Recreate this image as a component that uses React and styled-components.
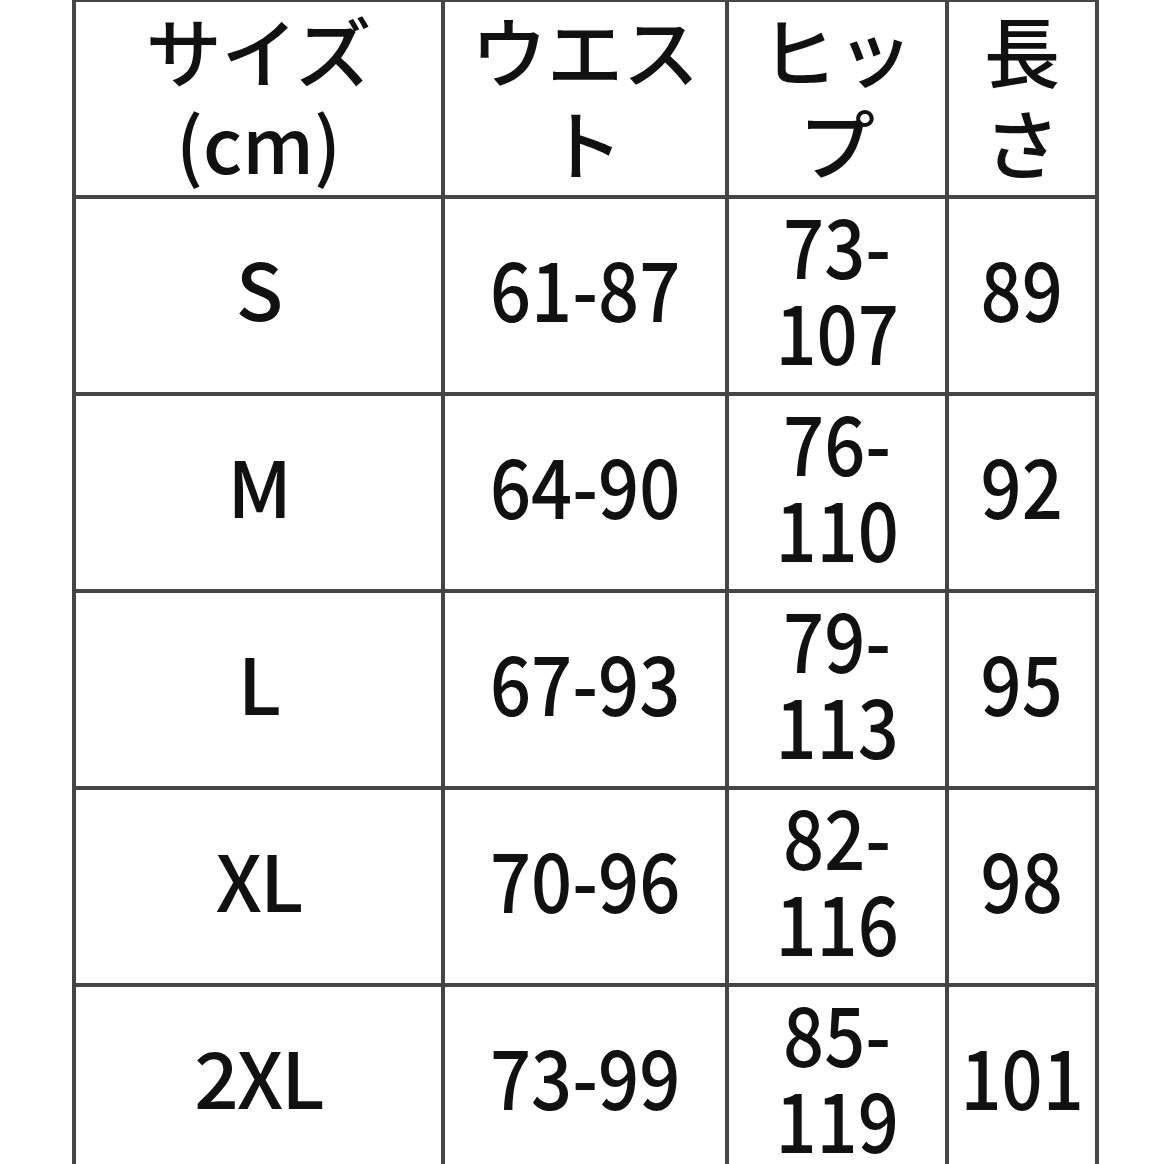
import React from "react";
import styled, { createGlobalStyle } from "styled-components";

const GlobalStyle = createGlobalStyle`
    html, body {
        margin: 0;
        padding: 0;
        background: #ffffff;
    }
    body {
        font-family: "Noto Sans CJK JP", "Noto Sans", sans-serif;
        color: #111111;
        overflow: hidden;
    }
`

const Page = styled.div`
    width: 1164px;
    height: 1164px;
    overflow: hidden;
`

const Table = styled.div`
    display: grid;
    grid-template-columns: 365px 280px 216px 146px;
    grid-auto-rows: 193px;
    gap: 4px;
    padding: 4px;
    background-color: #454545;
    width: fit-content;
    margin: -2px 0 0 72px;
`

const Cell = styled.div`
    background-color: #ffffff;
    display: flex;
    align-items: center;
    justify-content: center;
    text-align: center;
`

const HeadText = styled.div`
    font-size: 76px;
    line-height: 92px;
    font-weight: 500;
    white-space: nowrap;
    padding-bottom: 8px;
`

const SizeText = styled.div`
    font-size: 78px;
    line-height: 88px;
    font-weight: 500;
    letter-spacing: -2px;
    padding-bottom: 18px;
`

const NumText = styled.div`
    display: inline-block;
    font-size: 82px;
    line-height: 86px;
    font-weight: 500;
    white-space: nowrap;
    padding-bottom: 18px;
    transform: scaleX(0.88);
`

const headers = [["サイズ", "(cm)"], ["ウエス", "ト"], ["ヒッ", "プ"], ["長", "さ"]]

const rows = [
    { size: "S", waist: "61-87", hip: ["73-", "107"], length: "89" },
    { size: "M", waist: "64-90", hip: ["76-", "110"], length: "92" },
    { size: "L", waist: "67-93", hip: ["79-", "113"], length: "95" },
    { size: "XL", waist: "70-96", hip: ["82-", "116"], length: "98" },
    { size: "2XL", waist: "73-99", hip: ["85-", "119"], length: "101" },
]

const Lines = ({ lines }) => lines.map((line, i) => (
    <React.Fragment key={i}>
        {i > 0 && <br />}
        {line}
    </React.Fragment>
))

const App = () => {
    return (
        <Page>
            <GlobalStyle />
            <Table>
                {headers.map((h, i) => (
                    <Cell key={"h" + i}>
                        <HeadText><Lines lines={h} /></HeadText>
                    </Cell>
                ))}
                {rows.map((row) => (
                    <React.Fragment key={row.size}>
                        <Cell>
                            <SizeText>{row.size}</SizeText>
                        </Cell>
                        <Cell>
                            <NumText>{row.waist}</NumText>
                        </Cell>
                        <Cell>
                            <NumText><Lines lines={row.hip} /></NumText>
                        </Cell>
                        <Cell>
                            <NumText>{row.length}</NumText>
                        </Cell>
                    </React.Fragment>
                ))}
            </Table>
        </Page>
    )
}

export default App
